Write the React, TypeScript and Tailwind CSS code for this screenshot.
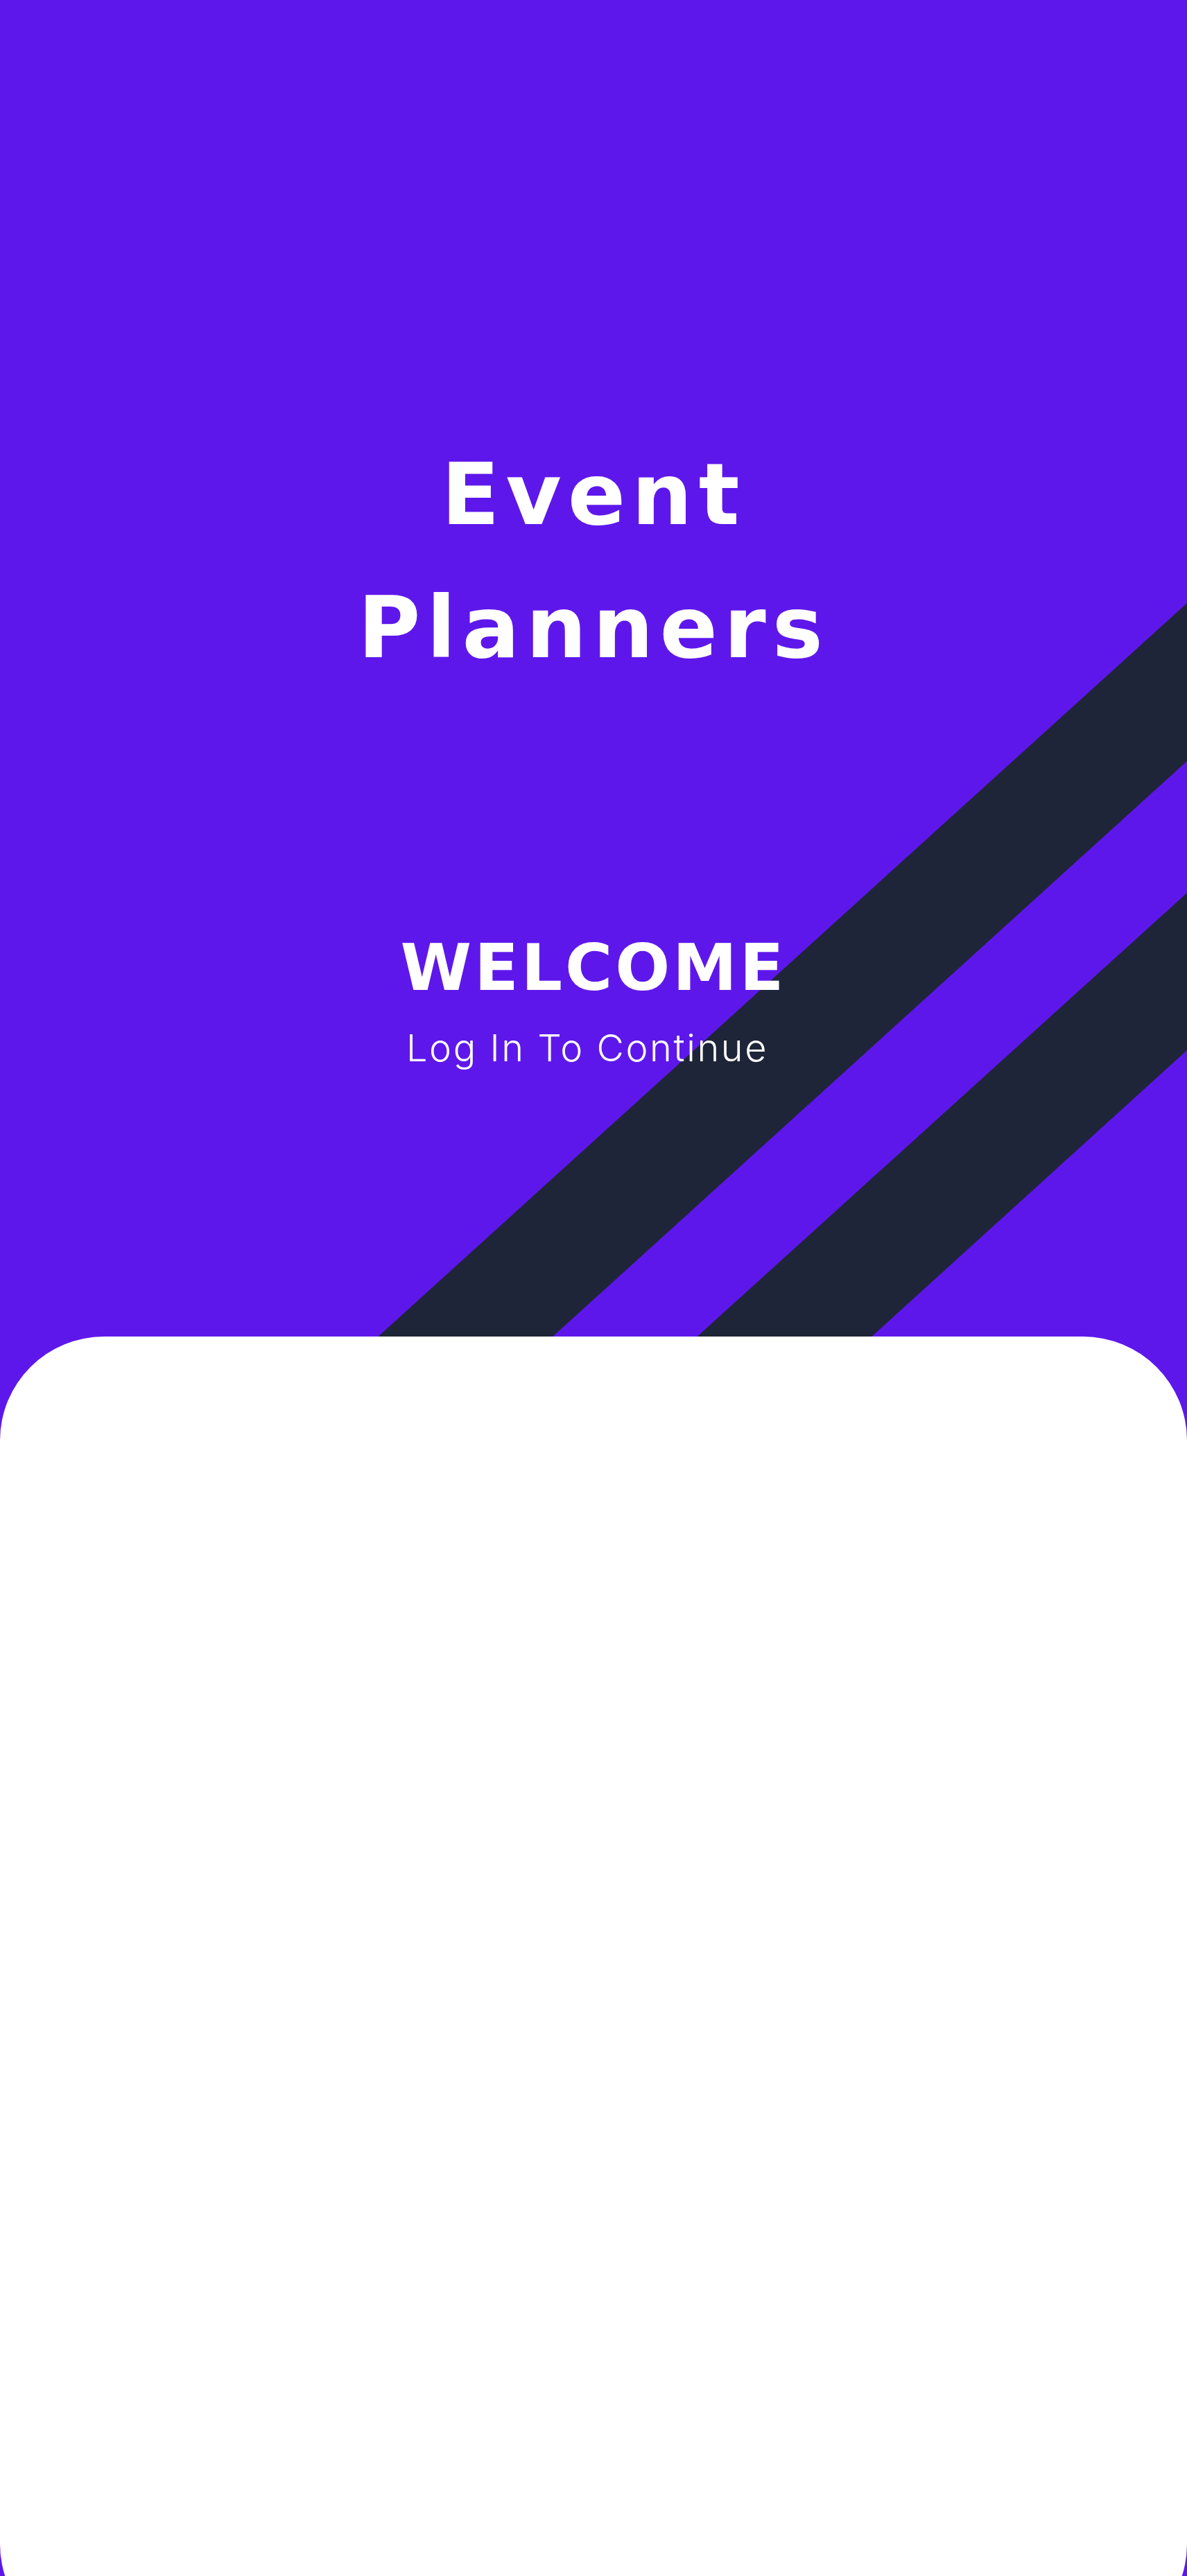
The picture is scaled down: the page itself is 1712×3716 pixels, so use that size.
import React from 'react';

// Diagonal stripes behind the heading, cut off by the white sheet
function Stripes() {
  return (
    <svg
      className="absolute left-0 top-0"
      width={1712}
      height={2000}
      viewBox="0 0 1712 2000"
      aria-hidden="true"
    >
      <polygon points="1712,870 466,2000 718,2000 1712,1098" fill="#1f2538" />
      <polygon points="1712,1288 926,2000 1178,2000 1712,1515" fill="#1f2538" />
    </svg>
  );
}

export default function App() {
  return (
    <div className="relative h-[3716px] w-full overflow-hidden bg-[#5e17eb]">
      <Stripes />

      <div className="relative flex flex-col items-center text-white">
        <h1 className="mt-[618px] text-center font-['DejaVu_Sans',sans-serif] text-[123px] font-bold leading-[192px] tracking-[9px]">
          Event
          <br />
          Planners
        </h1>

        <h2 className="mt-[324px] font-['DejaVu_Sans',sans-serif] text-[93px] font-bold leading-[140px] tracking-[4px]">
          WELCOME
        </h2>
        <p className="mt-[4px] pr-[18px] font-['Inter',sans-serif] text-[54px] font-light leading-[84px] tracking-[2.6px]">
          Log In To Continue
        </p>

        {/* login sheet */}
        <div className="mt-[374px] h-[1892px] w-full shrink-0 rounded-[150px] bg-white" />
      </div>
    </div>
  );
}
